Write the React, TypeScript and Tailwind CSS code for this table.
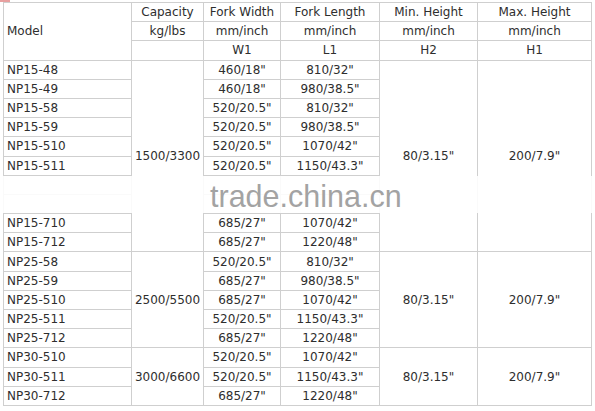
const groups = [
  {
    cap: "1500/3300",
    min: "80/3.15\"",
    max: "200/7.9\"",
    rows: [
      ["NP15-48", "460/18\"", "810/32\""],
      ["NP15-49", "460/18\"", "980/38.5\""],
      ["NP15-58", "520/20.5\"", "810/32\""],
      ["NP15-59", "520/20.5\"", "980/38.5\""],
      ["NP15-510", "520/20.5\"", "1070/42\""],
      ["NP15-511", "520/20.5\"", "1150/43.3\""],
      ["", "", ""],
      ["", "", ""],
      ["NP15-710", "685/27\"", "1070/42\""],
      ["NP15-712", "685/27\"", "1220/48\""],
    ],
  },
  {
    cap: "2500/5500",
    min: "80/3.15\"",
    max: "200/7.9\"",
    rows: [
      ["NP25-58", "520/20.5\"", "810/32\""],
      ["NP25-59", "685/27\"", "980/38.5\""],
      ["NP25-510", "685/27\"", "1070/42\""],
      ["NP25-511", "520/20.5\"", "1150/43.3\""],
      ["NP25-712", "685/27\"", "1220/48\""],
    ],
  },
  {
    cap: "3000/6600",
    min: "80/3.15\"",
    max: "200/7.9\"",
    rows: [
      ["NP30-510", "520/20.5\"", "1070/42\""],
      ["NP30-511", "520/20.5\"", "1150/43.3\""],
      ["NP30-712", "685/27\"", "1220/48\""],
    ],
  },
];

const td = "border border-[#cfcfcf] text-center p-0 leading-none";

export default function App() {
  return (
    <div className="relative w-[595px] h-[411px] bg-white font-['DejaVu_Sans',sans-serif] text-[12px] text-[#2e2e2e]">
      <div className="absolute left-0 top-0 w-[10px] h-[2px] bg-[#e8a0a0]" />
      <div className="pt-[2px] pl-[3px]">
        <table className="border-collapse table-fixed w-[588px]">
          <colgroup>
            <col className="w-[128px]" />
            <col className="w-[72px]" />
            <col className="w-[77px]" />
            <col className="w-[99px]" />
            <col className="w-[98px]" />
            <col className="w-[114px]" />
          </colgroup>
          <tbody>
            <tr className="h-[19.2px]">
              <td rowSpan={3} className={`${td} text-left pl-[3px]`}>Model</td>
              <td className={td}>Capacity</td>
              <td className={td}>Fork Width</td>
              <td className={td}>Fork Length</td>
              <td className={td}>Min. Height</td>
              <td className={td}>Max. Height</td>
            </tr>
            <tr className="h-[19.2px]">
              <td className={td}>kg/lbs</td>
              <td className={td}>mm/inch</td>
              <td className={td}>mm/inch</td>
              <td className={td}>mm/inch</td>
              <td className={td}>mm/inch</td>
            </tr>
            <tr className="h-[19.2px]">
              <td className={td}></td>
              <td className={td}>W1</td>
              <td className={td}>L1</td>
              <td className={td}>H2</td>
              <td className={td}>H1</td>
            </tr>
            {groups.map((g) =>
              g.rows.map((r, i) => (
                <tr key={g.cap + i} className="h-[19.2px]">
                  <td className={`${td} text-left pl-[3px]`}>{r[0]}</td>
                  {i === 0 && (
                    <td rowSpan={g.rows.length} className={td}>{g.cap}</td>
                  )}
                  <td className={td}>{r[1]}</td>
                  <td className={td}>{r[2]}</td>
                  {i === 0 && (
                    <td rowSpan={g.rows.length} className={td}>{g.min}</td>
                  )}
                  {i === 0 && (
                    <td rowSpan={g.rows.length} className={td}>{g.max}</td>
                  )}
                </tr>
              ))
            )}
          </tbody>
        </table>
      </div>
      {/* watermark band */}
      <div className="absolute left-0 top-[176px] w-[595px] h-[37px] bg-white/90 flex items-center">
        <span className="ml-[210px] mt-[4px] font-['Liberation_Sans',sans-serif] text-[30.5px] leading-none text-[#a3a3a3]">
          trade.china.cn
        </span>
      </div>
    </div>
  );
}
